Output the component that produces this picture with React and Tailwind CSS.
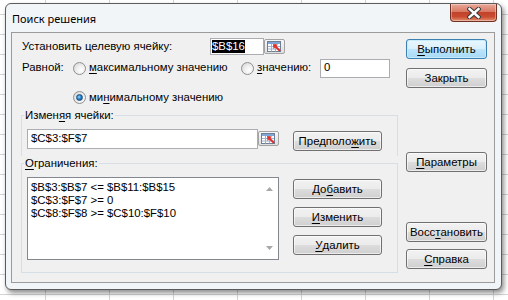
import React from "react";

function U({ children }) {
  return <span className="underline decoration-1 underline-offset-[2px]">{children}</span>;
}

function Btn({ children, className = "" }) {
  return (
    <div
      className={`h-[20px] flex items-center justify-center rounded-[3px] border border-[#707070] bg-[linear-gradient(to_bottom,#f2f2f2_0%,#ebebeb_50%,#dddddd_50%,#cfcfcf_100%)] shadow-[inset_0_0_0_1px_rgba(255,255,255,0.6)] leading-[14px] shrink-0 ${className}`}
    >
      {children}
    </div>
  );
}

function DefBtn({ children, className = "" }) {
  return (
    <div
      className={`h-[20px] flex items-center justify-center rounded-[3px] border border-[#3c7fb1] bg-[linear-gradient(to_bottom,#eaf6fd_0%,#d9f0fc_50%,#bee6fd_50%,#a7d9f5_100%)] shadow-[inset_0_0_0_1px_#c6ecfc] leading-[14px] shrink-0 ${className}`}
    >
      {children}
    </div>
  );
}

function Radio({ checked }) {
  return (
    <div className="w-[13px] h-[13px] rounded-full border border-[#8e8f8f] bg-[radial-gradient(circle_at_65%_65%,#ffffff_0%,#eeeeee_45%,#cfcfcf_100%)] flex items-center justify-center shrink-0">
      {checked && (
        <div className="w-[7px] h-[7px] rounded-full border border-[#1c4f80] bg-[radial-gradient(circle_at_40%_40%,#9fdcff_0%,#2f8fd6_40%,#0d3f6e_100%)]" />
      )}
    </div>
  );
}

function RefBtn({ className = "" }) {
  return (
    <div
      className={`w-[21px] h-[15px] border border-[#a3a3a3] rounded-[2px] bg-[linear-gradient(to_bottom,#f7f7f7,#dedede)] flex items-center justify-center shrink-0 ${className}`}
    >
      <svg width="15" height="11" viewBox="0 0 15 11">
        <rect x="0.5" y="0.5" width="13" height="10" fill="#ffffff" stroke="#6d7f95" />
        <rect x="1" y="1" width="12" height="2" fill="#7fa6d6" />
        <path d="M1 5.5H13M1 8H13M4.5 3V10.5M8.5 3V10.5" stroke="#9fb2d0" strokeWidth="1" />
        <path d="M7.5 4.5L13 10" stroke="#e0302a" strokeWidth="2" />
        <path d="M6 3L11 3.5L6.5 8Z" fill="#e0302a" />
      </svg>
    </div>
  );
}

export default function App() {
  return (
    <div className="w-[508px] h-[300px] overflow-hidden bg-white bg-[linear-gradient(to_right,#d4d4d4_1px,transparent_1px),linear-gradient(to_bottom,#d4d4d4_1px,transparent_1px)] bg-size-[64px_20px] bg-position-[45px_14px] pt-[3px] pl-[5px] font-['Liberation_Sans',Arial,sans-serif] text-[11.4px] text-black">
      <div className="w-[497px] h-[287px] rounded-[6px] border border-[#5b5b5b] bg-[#f2f5f8] shadow-[2px_3px_5px_rgba(0,0,0,0.45)] flex flex-col pl-[5px] pr-[6px] pb-[6px]">
        {/* title bar */}
        <div className="h-[28px] flex items-start justify-between shrink-0">
          <div className="pt-[7px] pl-[1px] text-[11px] leading-[16px] font-['Noto_Sans',sans-serif]">
            Поиск решения
          </div>
          <div className="w-[47px] h-[18px] -mr-[2px] rounded-b-[4px] border border-t-0 border-[#6f3226] bg-[linear-gradient(to_bottom,#eaa797_0%,#d87964_45%,#c2432b_50%,#c94b31_75%,#e3906f_100%)] shadow-[inset_0_0_0_1px_rgba(255,255,255,0.35)] flex items-center justify-center">
            <svg width="14" height="12" viewBox="0 0 14 12">
              <path d="M2.5 2L11.5 10M11.5 2L2.5 10" stroke="#3a3a3a" strokeWidth="4.4" strokeLinecap="square" />
              <path d="M2.5 2L11.5 10M11.5 2L2.5 10" stroke="#ffffff" strokeWidth="2.4" strokeLinecap="square" />
            </svg>
          </div>
        </div>

        {/* client area */}
        <div className="flex-1 border border-[#9b9b9b] bg-[#f0f0f0] flex pl-[9px]">
          {/* left column */}
          <div className="w-[377px] flex flex-col shrink-0">
            {/* row 1 */}
            <div className="mt-[5px] h-[17px] flex items-center">
              <div className="w-[189px] pl-[1px] shrink-0">Установить целевую ячейку:</div>
              <div className="w-[54px] h-[17px] border border-[#abadb3] bg-white flex items-center pl-[1px] shrink-0">
                <span className="bg-black text-white leading-[13px]">$B$16</span>
              </div>
              <RefBtn />
            </div>
            {/* row 2 */}
            <div className="mt-[3px] h-[20px] flex items-center">
              <div className="w-[52px] pl-[1px] shrink-0">Равной:</div>
              <Radio />
              <div className="w-[155px] pl-[3px] shrink-0">
                <U>м</U>аксимальному значению
              </div>
              <Radio />
              <div className="w-[66px] pl-[3px] shrink-0">
                <U>з</U>начению:
              </div>
              <div className="w-[70px] h-[19px] border border-[#abadb3] bg-white flex items-center pl-[3px] shrink-0">
                0
              </div>
            </div>
            {/* row 3 */}
            <div className="mt-[13px] h-[13px] flex items-center pl-[52px]">
              <Radio checked />
              <div className="pl-[3px]">
                ми<U>н</U>имальному значению
              </div>
            </div>

            {/* group 1 */}
            <fieldset className="mt-[4px] border border-b-0 border-[#d5dfe5] pb-[5px] flex flex-col">
              <legend className="ml-[2px] px-[1px] leading-[14px]">
                Измен<U>я</U>я ячейки:
              </legend>
              <div className="mt-[7px] flex items-start">
                <div className="ml-[5px] w-[231px] h-[20px] border border-[#abadb3] bg-white flex items-center pl-[3px] shrink-0">
                  $C$3:$F$7
                </div>
                <RefBtn className="mt-[2px]" />
                <Btn className="ml-[14px] mt-[2px] w-[89px]">
                  Предполо<U>ж</U>ить
                </Btn>
              </div>
            </fieldset>

            {/* group 2 */}
            <fieldset className="border border-[#d5dfe5] pb-[12px] flex flex-col">
              <legend className="ml-[2px] px-[1px] leading-[14px]">
                <U>О</U>граничения:
              </legend>
              <div className="mt-[7px] flex items-start">
                <div className="ml-[5px] w-[252px] h-[83px] border border-[#828790] bg-white flex shrink-0">
                  <div className="flex-1 pl-[3px] pt-[3px] leading-[13px]">
                    <div>$B$3:$B$7 &lt;= $B$11:$B$15</div>
                    <div>$C$3:$F$7 &gt;= 0</div>
                    <div>$C$8:$F$8 &gt;= $C$10:$F$10</div>
                  </div>
                  <div className="w-[17px] flex flex-col items-center justify-between py-[9px]">
                    <svg width="7" height="4" viewBox="0 0 7 4">
                      <path d="M0 4L3.5 0L7 4Z" fill="#a8a8a8" />
                    </svg>
                    <svg width="7" height="4" viewBox="0 0 7 4">
                      <path d="M0 0L3.5 4L7 0Z" fill="#a8a8a8" />
                    </svg>
                  </div>
                </div>
                <div className="ml-[14px] mt-[2px] flex flex-col gap-[8px]">
                  <Btn className="w-[89px]">
                    До<U>б</U>авить
                  </Btn>
                  <Btn className="w-[89px]">
                    <U>И</U>зменить
                  </Btn>
                  <Btn className="w-[89px]">
                    <U>У</U>далить
                  </Btn>
                </div>
              </div>
            </fieldset>
          </div>

          {/* right column */}
          <div className="ml-[8px] w-[81px] flex flex-col shrink-0">
            <DefBtn className="mt-[6px] w-[81px]">
              <U>В</U>ыполнить
            </DefBtn>
            <Btn className="mt-[9px] w-[81px]">Закрыть</Btn>
            <Btn className="mt-[64px] w-[81px]">
              <U>П</U>араметры
            </Btn>
            <Btn className="mt-[50px] w-[81px]">
              Восс<U>т</U>ановить
            </Btn>
            <Btn className="mt-[7px] w-[81px]">
              <U>С</U>правка
            </Btn>
          </div>
        </div>
      </div>
    </div>
  );
}
